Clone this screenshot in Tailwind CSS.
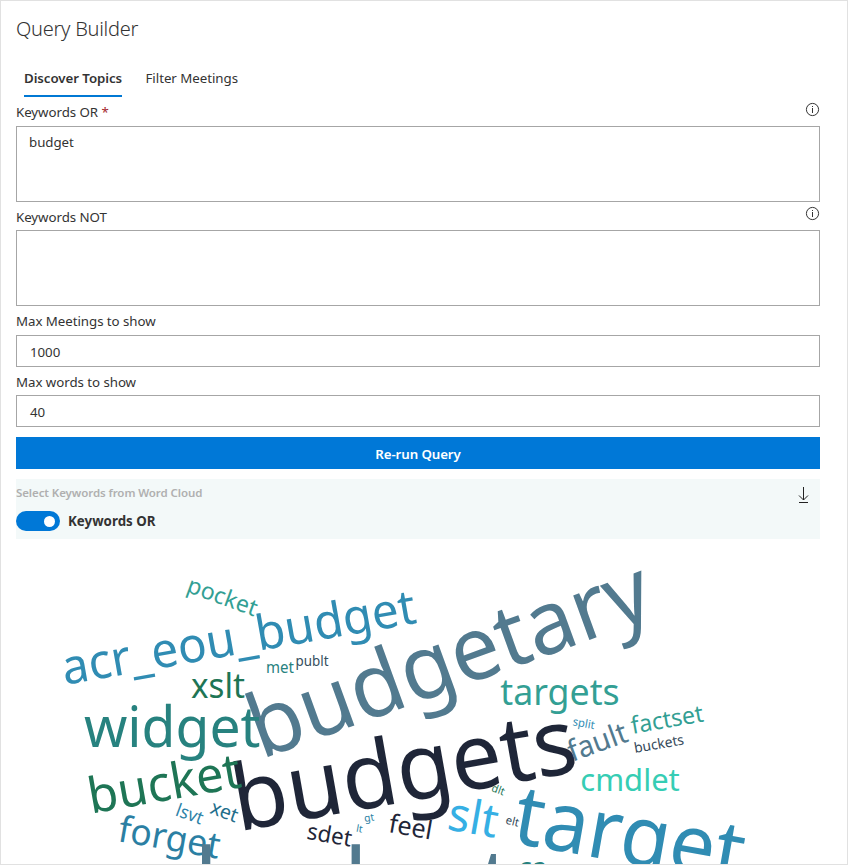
<!DOCTYPE html>
<html lang="en">
<head>
<meta charset="utf-8">
<title>Query Builder</title>
<script src="https://cdn.jsdelivr.net/npm/@tailwindcss/browser@4"></script>
</head>
<body class="bg-white font-['Noto_Sans','Open_Sans',sans-serif] text-[#333333]">
<main class="flex h-[865px] w-[848px] flex-col overflow-hidden border border-[#e1e1e1] pl-[15px]">
  <h1 class="mt-[14px] h-7 text-[20px] leading-7 font-light tracking-[-0.27px] whitespace-nowrap text-[#333]"><span>Query Builder</span></h1>
  <nav class="mt-[19px] flex h-[35px] gap-6 pl-2 text-[13.3px] leading-[32px] whitespace-nowrap">
    <span class="h-[35px] w-[98px] border-b-2 border-[#0078d4] font-semibold tracking-[-0.07px]">Discover Topics</span>
    <span class="-ml-[0.5px] tracking-[-0.04px]">Filter Meetings</span>
  </nav>
  <form class="flex w-[804px] flex-col text-[13.3px] tracking-[-0.05px]">
    <div class="flex h-[29px] items-start justify-between">
      <label class="pt-[5px] leading-5">Keywords OR <span class="text-[#a4262c]">*</span></label>
      <svg class="mt-[5px] h-[15px] w-[15px]" viewBox="0 0 15 15" fill="none" stroke="#333"><circle cx="7.5" cy="7.5" r="6.1"/><path d="M7.5 6V11M7.5 4v1"/></svg>
    </div>
    <div class="h-[76px] border border-[#a6a6a6] px-3 pt-[5px] leading-5">budget</div>
    <div class="flex h-[28px] items-start justify-between">
      <label class="pt-[5px] leading-5">Keywords NOT</label>
      <svg class="mt-[4px] h-[15px] w-[15px]" viewBox="0 0 15 15" fill="none" stroke="#333"><circle cx="7.5" cy="7.5" r="6.1"/><path d="M7.5 6V11M7.5 4v1"/></svg>
    </div>
    <div class="h-[76px] border border-[#a6a6a6]"></div>
    <label class="h-[29px] pt-[5px] leading-5">Max Meetings to show</label>
    <div class="h-8 border border-[#a6a6a6] px-[13px] leading-[32px]">1000</div>
    <label class="h-[28px] pt-[5px] leading-5">Max words to show</label>
    <div class="h-8 border border-[#a6a6a6] px-[13px] leading-[32px]">40</div>
    <button type="button" class="mt-[10px] h-8 bg-[#0078d7] pt-[3px] font-semibold tracking-[-0.1px] text-white">Re-run Query</button>
  </form>
  <section class="mt-[10px] flex h-[60px] w-[804px] shrink-0 justify-between bg-[#f3f9f9]">
    <div>
      <p class="pt-[5px] text-[11.5px] leading-[18px] font-semibold tracking-[-0.09px] text-[#b0b0b0]">Select Keywords from Word Cloud</p>
      <div class="mt-[9px] flex h-5 items-center gap-2">
        <span class="flex h-5 w-11 items-center justify-end rounded-full bg-[#0078d7] pr-[5px]"><span class="h-[11px] w-[11px] rounded-full bg-white"></span></span>
        <span class="text-[13.3px] leading-5 font-bold tracking-[0.03px]">Keywords OR</span>
      </div>
    </div>
    <svg class="mt-2 mr-[11px] h-[17px] w-[11px]" viewBox="0 0 11 17" fill="none" stroke="#222"><path d="M5.5 0V13M1 8.5L5.5 13L10 8.5M1 15.5H10"/></svg>
  </section>
  <svg class="-ml-[15px] h-[325px] w-[846px] shrink-0" viewBox="1 539 846 325">
    <text transform="translate(261 759.5) rotate(-20)" font-size="88.5" textLength="422" lengthAdjust="spacingAndGlyphs" fill="#527a8f">budgetary</text>
    <text transform="translate(238 831.4) rotate(-10)" font-size="92" textLength="348" lengthAdjust="spacingAndGlyphs" fill="#1f2638">budgets</text>
    <text transform="translate(510.8 842.5) rotate(10)" font-size="84" textLength="232" lengthAdjust="spacingAndGlyphs" fill="#308cb3">target</text>
    <text transform="translate(64.8 685) rotate(-10)" font-size="48.7" textLength="358.5" lengthAdjust="spacingAndGlyphs" fill="#308cb3">acr_eou_budget</text>
    <text transform="translate(84 747)" font-size="55.8" textLength="176.5" lengthAdjust="spacingAndGlyphs" fill="#27827f">widget</text>
    <text transform="translate(91 813.8) rotate(-10)" font-size="49.5" textLength="154.5" lengthAdjust="spacingAndGlyphs" fill="#1e7555">bucket</text>
    <text transform="translate(446 829.2) rotate(10)" font-size="46.8" textLength="50" lengthAdjust="spacingAndGlyphs" fill="#36afe4">slt</text>
    <text transform="translate(500.3 704.8)" font-size="37.2" textLength="119.4" lengthAdjust="spacingAndGlyphs" fill="#339f94">targets</text>
    <text transform="translate(116.8 841) rotate(10)" font-size="36.3" textLength="102.5" lengthAdjust="spacingAndGlyphs" fill="#2b7fa3">forget</text>
    <text transform="translate(191 697.8)" font-size="35.3" textLength="54" lengthAdjust="spacingAndGlyphs" fill="#1e7555">xslt</text>
    <text transform="translate(580.3 790.5)" font-size="31.6" textLength="99.5" lengthAdjust="spacingAndGlyphs" fill="#36cdb4">cmdlet</text>
    <text transform="translate(571.9 762) rotate(-20)" font-size="29.6" textLength="61.5" lengthAdjust="spacingAndGlyphs" fill="#527a8f">fault</text>
    <text transform="translate(387.7 832) rotate(10)" font-size="25.8" textLength="43.5" lengthAdjust="spacingAndGlyphs" fill="#1f2638">feel</text>
    <text transform="translate(632.6 733.9) rotate(-10)" font-size="23.9" textLength="73" lengthAdjust="spacingAndGlyphs" fill="#339f94">factset</text>
    <text transform="translate(185.6 591.6) rotate(20)" font-size="23.3" textLength="73" lengthAdjust="spacingAndGlyphs" fill="#339f94">pocket</text>
    <text transform="translate(306 838.8) rotate(10)" font-size="23" textLength="45" lengthAdjust="spacingAndGlyphs" fill="#1f2638">sdet</text>
    <text transform="translate(208.9 813) rotate(20)" font-size="20" textLength="28" lengthAdjust="spacingAndGlyphs" fill="#236e8c">xet</text>
    <text transform="translate(174.6 815.2) rotate(20)" font-size="18.2" textLength="27.5" lengthAdjust="spacingAndGlyphs" fill="#2f83a8">lsvt</text>
    <text transform="translate(265.9 672.9)" font-size="15.5" textLength="28" lengthAdjust="spacingAndGlyphs" fill="#27827f">met</text>
    <text transform="translate(295.5 666)" font-size="13.5" textLength="33" lengthAdjust="spacingAndGlyphs" fill="#36505f">publt</text>
    <text transform="translate(635 753) rotate(-10)" font-size="14.1" textLength="50.3" lengthAdjust="spacingAndGlyphs" fill="#34495a">buckets</text>
    <text transform="translate(572.3 725.3) rotate(10)" font-size="11.5" textLength="22" lengthAdjust="spacingAndGlyphs" fill="#308cb3">split</text>
    <text transform="translate(505 823.5) rotate(14)" font-size="11.5" textLength="13.3" lengthAdjust="spacingAndGlyphs" fill="#34495a">elt</text>
    <text transform="translate(490.8 791) rotate(20)" font-size="11" textLength="13" lengthAdjust="spacingAndGlyphs" fill="#1e7555">dlt</text>
    <text transform="translate(364.8 822) rotate(-10)" font-size="10.3" textLength="10" lengthAdjust="spacingAndGlyphs" fill="#2b7fa3">gt</text>
    <text transform="translate(355.7 831.5) rotate(10)" font-size="10" textLength="6.5" lengthAdjust="spacingAndGlyphs" fill="#2b7fa3">lt</text>
    <text transform="translate(194 918)" font-size="97" textLength="319" lengthAdjust="spacingAndGlyphs" fill="#527a8f">budget</text>
    <text transform="translate(518.5 877.5)" font-size="28.6" textLength="29" lengthAdjust="spacingAndGlyphs" fill="#27827f">ca</text>
  </svg>
</main>
</body>
</html>
